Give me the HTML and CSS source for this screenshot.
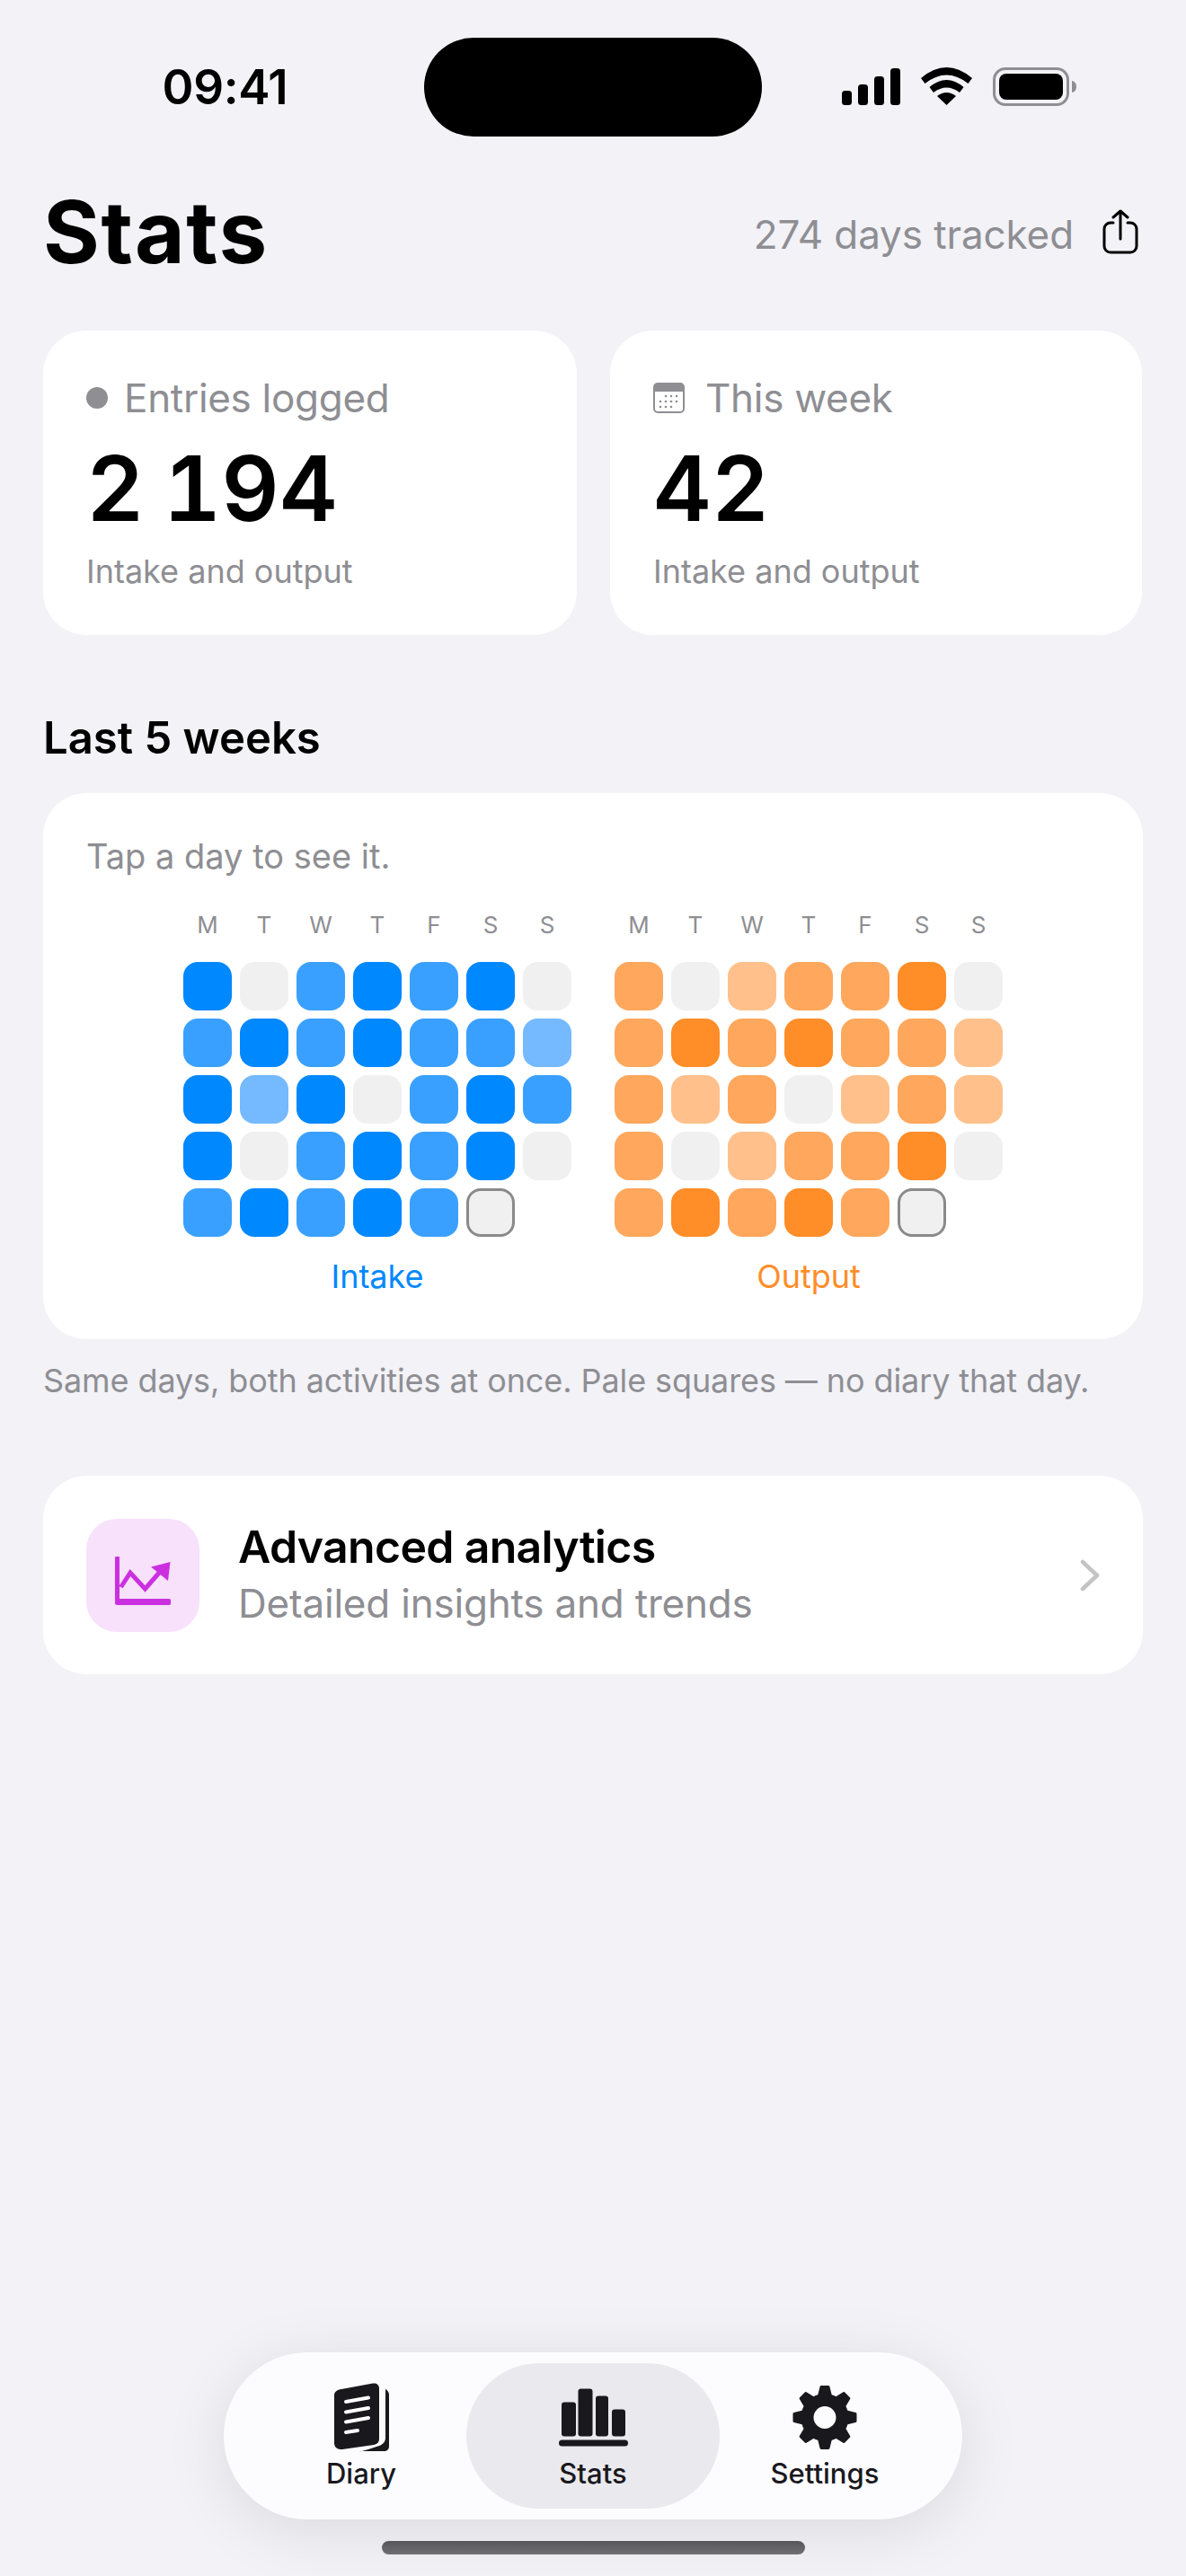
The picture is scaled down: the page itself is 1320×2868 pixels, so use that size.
FILE: index.html
```html
<!DOCTYPE html>
<html lang="en">
<head>
  <meta charset="UTF-8">
  <meta name="viewport" content="width=device-width, initial-scale=1.0">
  <title>Stats</title>
  <link rel="stylesheet" href="styles.css">
</head>
<body>
  <div class="app">
    <div class="status-bar">
      <div class="time">09:41</div>
      <div class="island"></div>
      <div class="status-icons">
        <svg class="signal" width="65" height="42" viewBox="0 0 65 42"><rect x="0" y="25" width="11" height="16" rx="3.5"/><rect x="18" y="18" width="11" height="23" rx="3.5"/><rect x="36" y="9" width="11" height="32" rx="3.5"/><rect x="54" y="0" width="11" height="41" rx="3.5"/></svg>
        <svg class="wifi" width="57" height="42" viewBox="0 0 57 42"><path d="M0 12Q28.500 -12 57 12L52.500 18Q28.500 -1 4.500 18Z"/><path d="M9.500 22Q28.500 6 47.500 22L43 28Q28.500 17 14 28Z"/><path d="M18 32Q28.500 24 39 32L28.500 42Z"/></svg>
        <svg class="battery" width="93" height="43" viewBox="0 0 93 43"><rect x="1.500" y="1.500" width="82" height="40" rx="12.500" fill="none" stroke="#8e8e93" stroke-width="3"/><rect x="7" y="7" width="71" height="29" rx="8"/><path d="M88 15c3 .5 5 3 5 6.500s-2 6-5 6.500z" fill="#8e8e93"/></svg>
      </div>
    </div>

    <div class="page-head">
      <h1>Stats</h1>
      <div class="head-right">
        <span class="tracked">274 days tracked</span>
        <svg class="share" width="40" height="50" viewBox="0 0 40 50" fill="none" stroke="#000" stroke-width="3" stroke-linecap="round" stroke-linejoin="round"><path d="M12 15H9a7 7 0 0 0-7 7v19a7 7 0 0 0 7 7h22a7 7 0 0 0 7-7V22a7 7 0 0 0-7-7h-3"/><path d="M20 33V2M12 9l8-7 8 7"/></svg>
      </div>
    </div>

    <div class="summary">
      <div class="card summary-card">
        <div class="summary-label"><span class="dot"></span>Entries logged</div>
        <div class="summary-value">2 194</div>
        <div class="summary-note">Intake and output</div>
      </div>
      <div class="card summary-card">
        <div class="summary-label label-week">
          <svg class="calendar" width="35" height="34" viewBox="0 0 35 34"><rect x="1" y="1" width="33" height="32" rx="4" fill="none" stroke="#8e8e93" stroke-width="2"/><path d="M1 5a4 4 0 0 1 4-4h25a4 4 0 0 1 4 4v5H1z" fill="#8e8e93"/><g fill="#8e8e93"><circle cx="14" cy="15" r="1.300"/><circle cx="20" cy="15" r="1.300"/><circle cx="26" cy="15" r="1.300"/><circle cx="8" cy="21" r="1.300"/><circle cx="14" cy="21" r="1.300"/><circle cx="20" cy="21" r="1.300"/><circle cx="26" cy="21" r="1.300"/><circle cx="8" cy="27" r="1.300"/><circle cx="14" cy="27" r="1.300"/><circle cx="20" cy="27" r="1.300"/></g></svg>
          This week
        </div>
        <div class="summary-value">42</div>
        <div class="summary-note">Intake and output</div>
      </div>
    </div>

    <h2 class="section-title">Last 5 weeks</h2>
    <div class="card weeks-card">
      <p class="weeks-hint">Tap a day to see it.</p>
      <div class="heatmaps">
        <div class="heatmap intake">
          <div class="days"><span>M</span><span>T</span><span>W</span><span>T</span><span>F</span><span>S</span><span>S</span></div>
          <div class="cells">
            <i class="l3"></i><i></i><i class="l2"></i><i class="l3"></i><i class="l2"></i><i class="l3"></i><i></i>
            <i class="l2"></i><i class="l3"></i><i class="l2"></i><i class="l3"></i><i class="l2"></i><i class="l2"></i><i class="l1"></i>
            <i class="l3"></i><i class="l1"></i><i class="l3"></i><i></i><i class="l2"></i><i class="l3"></i><i class="l2"></i>
            <i class="l3"></i><i></i><i class="l2"></i><i class="l3"></i><i class="l2"></i><i class="l3"></i><i></i>
            <i class="l2"></i><i class="l3"></i><i class="l2"></i><i class="l3"></i><i class="l2"></i><i class="today"></i>
          </div>
          <div class="heatmap-name">Intake</div>
        </div>
        <div class="heatmap output">
          <div class="days"><span>M</span><span>T</span><span>W</span><span>T</span><span>F</span><span>S</span><span>S</span></div>
          <div class="cells">
            <i class="l2"></i><i></i><i class="l1"></i><i class="l2"></i><i class="l2"></i><i class="l3"></i><i></i>
            <i class="l2"></i><i class="l3"></i><i class="l2"></i><i class="l3"></i><i class="l2"></i><i class="l2"></i><i class="l1"></i>
            <i class="l2"></i><i class="l1"></i><i class="l2"></i><i></i><i class="l1"></i><i class="l2"></i><i class="l1"></i>
            <i class="l2"></i><i></i><i class="l1"></i><i class="l2"></i><i class="l2"></i><i class="l3"></i><i></i>
            <i class="l2"></i><i class="l3"></i><i class="l2"></i><i class="l3"></i><i class="l2"></i><i class="today"></i>
          </div>
          <div class="heatmap-name">Output</div>
        </div>
      </div>
    </div>
    <p class="weeks-caption">Same days, both activities at once. Pale squares — no diary that day.</p>

    <div class="card analytics">
      <div class="analytics-icon">
        <svg width="62" height="54" viewBox="0 0 62 54"><path d="M0 1.500a2.500 2.500 0 0 1 5 0V47h54.500a3 3 0 0 1 0 7H2.500A2.500 2.500 0 0 1 0 51.500z" fill="#cb30e0"/><path d="M6.500 34 17 18l16.500 18L50 17" fill="none" stroke="#cb30e0" stroke-width="5"/><path d="M61.500 6 40 11.500 59 27z" fill="#cb30e0"/></svg>
      </div>
      <div class="analytics-text">
        <div class="analytics-title">Advanced analytics</div>
        <div class="analytics-sub">Detailed insights and trends</div>
      </div>
      <svg class="chevron" width="22" height="36" viewBox="0 0 22 36" fill="none" stroke="#c4c4c7" stroke-width="4.500" stroke-linecap="round" stroke-linejoin="round"><path d="M3 3l16 15L3 33"/></svg>
    </div>

    <nav class="tabbar">
      <div class="tab">
        <svg width="61" height="77" viewBox="0 0 61 77"><path d="M8 7 43 .500C47 0 50 2 50 6v56c0 4-2 6-6 7L9 74c-5 .500-9-2-9-7V14c0-4 3-6.500 8-7z" fill="#19191d"/><path d="M56.500 6.500C59 8 61 10 61 13v57c0 4-2 6-6 6H30l-3 1 11-3 9-3c8-2 10-6 10-10V6.500z" fill="#19191d"/><path d="M13 21 38 16.500M13 32.500 38 28M13 43.500 38 39M13 55l13-2" stroke="#fff" stroke-width="4" stroke-linecap="round" fill="none"/></svg>
        <span>Diary</span>
      </div>
      <div class="tab active">
        <svg width="77" height="64" viewBox="0 0 77 64"><rect x="3" y="15" width="16" height="38" rx="3" /><rect x="21.500" y="0" width="16" height="53" rx="3"/><rect x="41" y="8" width="14" height="45" rx="3"/><rect x="59" y="23" width="15" height="30" rx="3"/><rect x="0" y="57" width="77" height="7" rx="3.500"/></svg>
        <span>Stats</span>
      </div>
      <div class="tab">
        <svg width="72" height="72" viewBox="0 0 72 72"><circle cx="36" cy="36" r="19.500" fill="none" stroke="#19191d" stroke-width="14"/><g fill="#19191d" stroke="#19191d" stroke-width="3" stroke-linejoin="round"><path d="M32 2h8l3 12H29z"/><path d="M32 2h8l3 12H29z" transform="rotate(45 36 36)"/><path d="M32 2h8l3 12H29z" transform="rotate(90 36 36)"/><path d="M32 2h8l3 12H29z" transform="rotate(135 36 36)"/><path d="M32 2h8l3 12H29z" transform="rotate(180 36 36)"/><path d="M32 2h8l3 12H29z" transform="rotate(225 36 36)"/><path d="M32 2h8l3 12H29z" transform="rotate(270 36 36)"/><path d="M32 2h8l3 12H29z" transform="rotate(315 36 36)"/></g></svg>
        <span>Settings</span>
      </div>
    </nav>
    <div class="home-indicator"></div>
  </div>
</body>
</html>
```

FILE: styles.css
```css
* {
  box-sizing: border-box;
}
html, body {
  margin: 0;
  padding: 0;
}
body {
  font-family: Inter, "Noto Sans", sans-serif;
  background: #f2f2f7;
  color: #000;
}
.app {
  height: 2868px;
  display: flex;
  flex-direction: column;
  padding: 0 48px;
}

/* status bar */
.status-bar {
  display: grid;
  grid-template-columns: 1fr 376px 1fr;
  margin: 0 -48px;
  padding-top: 42px;
  height: 152px;
}
.time {
  font-size: 53px;
  font-weight: 600;
  line-height: 110px;
  text-align: center;
  padding-left: 29px;
  letter-spacing: -0.4px;
}
.island {
  background: #000;
  border-radius: 55px;
}
.status-icons {
  display: flex;
  align-items: flex-start;
  padding: 33px 0 0 89px;
}
.signal {
  margin: 1px 23px 0 0;
}
.wifi {
  margin-right: 23px;
}

/* page head */
.page-head {
  display: flex;
  align-items: center;
  justify-content: space-between;
  margin-top: 50px;
  height: 112px;
}
h1 {
  margin: 0;
  font-size: 96px;
  font-weight: 700;
  letter-spacing: 1.7px;
  line-height: 112px;
}
.head-right {
  display: flex;
  align-items: center;
  gap: 32px;
  padding-right: 5px;
}
.tracked {
  font-size: 44px;
  color: #8e8e93;
  margin-top: 6px;
  letter-spacing: -0.1px;
}
.share {
  margin-top: -1px;
}

/* cards */
.card {
  background: #fff;
  border-radius: 48px;
}
.summary {
  display: grid;
  grid-template-columns: 594px 592px;
  gap: 37px;
  margin-top: 54px;
}
.summary-card {
  height: 339px;
  padding: 48px 48px 0;
}
.summary-label {
  display: flex;
  align-items: center;
  font-size: 44px;
  line-height: 54px;
  color: #8e8e93;
  letter-spacing: -0.3px;
}
.dot {
  width: 24px;
  height: 24px;
  border-radius: 50%;
  background: #8e8e93;
  margin-right: 18px;
}
.calendar {
  margin-right: 23px;
}
.summary-value {
  font-size: 100px;
  font-weight: 600;
  font-variant-numeric: tabular-nums;
  line-height: 120px;
  margin-top: 14px;
  word-spacing: -6px;
}
.summary-note {
  font-size: 36px;
  line-height: 44px;
  color: #8e8e93;
  margin-top: 10px;
}

.section-title {
  margin: 85px 0 0;
  font-size: 49px;
  font-weight: 600;
  line-height: 60px;
}
.weeks-card {
  margin-top: 31px;
  height: 608px;
  padding: 48px;
}
.weeks-hint {
  margin: 0;
  font-size: 38px;
  line-height: 44px;
  color: #8e8e93;
}
.heatmaps {
  display: flex;
  justify-content: center;
  gap: 48px;
  margin-top: 39px;
}
.heatmap {
  width: 432px;
}
.days, .cells {
  display: grid;
  grid-template-columns: repeat(7, 54px);
  gap: 9px;
}
.days {
  font-size: 26px;
  line-height: 32px;
  color: #8e8e93;
  text-align: center;
}
.cells {
  margin-top: 25px;
}
.cells i {
  display: block;
  height: 54px;
  border-radius: 16px;
  background: #f0f0f0;
}
.intake .l3 { background: #0088ff; }
.intake .l2 { background: #3aa0ff; }
.intake .l1 { background: #75b9ff; }
.output .l3 { background: #ff8d28; }
.output .l2 { background: #ffa75c; }
.output .l1 { background: #ffc08b; }
.cells .today {
  border: 3px solid #8a8a8a;
}
.heatmap-name {
  margin-top: 22px;
  font-size: 36px;
  line-height: 44px;
  text-align: center;
}
.intake .heatmap-name { color: #0088ff; }
.output .heatmap-name { color: #ff8d28; }
.weeks-caption {
  margin: 24px 0 0;
  font-size: 36px;
  line-height: 44px;
  color: #8e8e93;
  letter-spacing: -0.1px;
}

/* analytics row */
.analytics {
  display: flex;
  align-items: center;
  height: 221px;
  margin-top: 84px;
  padding: 0 48px;
}
.analytics-icon {
  width: 126px;
  height: 126px;
  border-radius: 34px;
  background: #f7e1fb;
  display: flex;
  align-items: center;
  justify-content: center;
  margin-right: 43px;
}
.analytics-icon svg {
  margin-top: 12px;
}
.analytics-text {
  flex: 1;
}
.analytics-title {
  font-size: 50px;
  font-weight: 600;
  line-height: 62px;
  letter-spacing: -0.7px;
}
.analytics-sub {
  font-size: 44px;
  line-height: 62px;
  color: #8e8e93;
  letter-spacing: -0.2px;
  padding-top: 1px;
}

/* tab bar */
.tabbar {
  margin-top: auto;
  align-self: center;
  width: 822px;
  height: 186px;
  border-radius: 93px;
  background: #fcfcff;
  box-shadow: 0 12px 70px rgba(0, 0, 0, 0.1);
  display: flex;
  justify-content: center;
  padding: 12px 0;
}
.tab {
  position: relative;
  width: 258px;
  display: flex;
  flex-direction: column;
  align-items: center;
  padding-top: 22px;
  font-size: 31px;
  font-weight: 500;
  color: #19191d;
}
.tab svg {
  position: relative;
  height: 77px;
  fill: #19191d;
}
.tab span {
  position: relative;
  margin-top: 5px;
}
.tab.active::before {
  content: "";
  position: absolute;
  top: 0;
  bottom: 0;
  left: -12px;
  right: -12px;
  border-radius: 81px;
  background: #e9e9ee;
}
.home-indicator {
  align-self: center;
  width: 471px;
  height: 15px;
  margin: 24px 0 24px;
  border-radius: 8px;
  background: linear-gradient(#56565a, #707074);
}
```
